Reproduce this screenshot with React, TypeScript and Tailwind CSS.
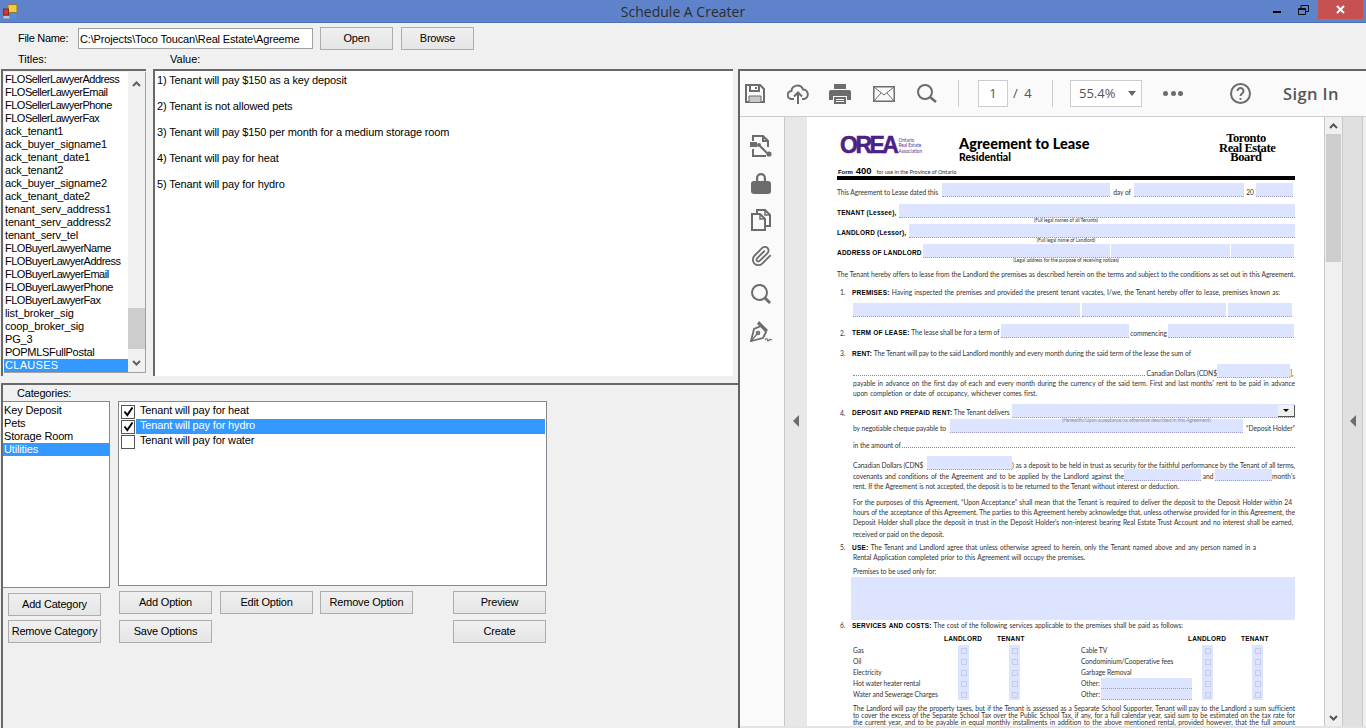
import { FC, ReactNode } from "react";

const titles = [
  "FLOSellerLawyerAddress",
  "FLOSellerLawyerEmail",
  "FLOSellerLawyerPhone",
  "FLOSellerLawyerFax",
  "ack_tenant1",
  "ack_buyer_signame1",
  "ack_tenant_date1",
  "ack_tenant2",
  "ack_buyer_signame2",
  "ack_tenant_date2",
  "tenant_serv_address1",
  "tenant_serv_address2",
  "tenant_serv_tel",
  "FLOBuyerLawyerName",
  "FLOBuyerLawyerAddress",
  "FLOBuyerLawyerEmail",
  "FLOBuyerLawyerPhone",
  "FLOBuyerLawyerFax",
  "list_broker_sig",
  "coop_broker_sig",
  "PG_3",
  "POPMLSFullPostal",
];

const clauses = [
  "1) Tenant will pay $150 as a key deposit",
  "2) Tenant is not allowed pets",
  "3) Tenant will pay $150 per month for a medium storage room",
  "4) Tenant will pay for heat",
  "5) Tenant will pay for hydro",
];

const categories = ["Key Deposit", "Pets", "Storage Room", "Utilities"];

const options = [
  { label: "Tenant will pay for heat", checked: true, selected: false },
  { label: "Tenant will pay for hydro", checked: true, selected: true },
  { label: "Tenant will pay for water", checked: false, selected: false },
];

const Btn: FC<{ className?: string; children: ReactNode }> = ({ className = "", children }) => (
  <button className={`h-[23px] shrink-0 whitespace-nowrap border border-[#adadad] bg-gradient-to-b from-[#f0f0f0] to-[#e5e5e5] text-[11px] tracking-[-0.2px] text-black ${className}`}>
    {children}
  </button>
);

const Field: FC<{ className?: string }> = ({ className = "" }) => (
  <span className={`block shrink-0 bg-[#dde4ff] border-b border-dotted border-[#9c9cc4] ${className}`} />
);

const Dots: FC<{ className?: string }> = ({ className = "" }) => (
  <span className={`block flex-1 border-b border-dotted border-[#888] mb-[2px] ${className}`} />
);

// a line of the form, spread to its width like the PDF does
const Line: FC<{ className?: string; children: ReactNode }> = ({ className = "", children }) => (
  <div className={`h-[10px] leading-[10px] whitespace-nowrap [text-align-last:justify] ${className}`}>{children}</div>
);

const B: FC<{ children: ReactNode }> = ({ children }) => (
  <b className="font-['Liberation_Sans',sans-serif] font-bold text-[6.5px] tracking-[0.2px] text-black">{children}</b>
);

const Num: FC<{ n: string; children: ReactNode; className?: string }> = ({ n, children, className = "" }) => (
  <div className={`flex h-[10px] leading-[10px] whitespace-nowrap ${className}`}>
    <span className="w-[15px] pl-[3px] shrink-0">{n}</span>
    <div className="flex-1">{children}</div>
  </div>
);

const Caption: FC<{ children: ReactNode }> = ({ children }) => (
  <div className="h-[6px] leading-[5px] text-center text-[4.9px] text-[#333]">{children}</div>
);

const Check: FC<{ className?: string }> = ({ className = "" }) => (
  <span className={`flex items-center justify-center w-[11px] h-full bg-[#dde4ff] shrink-0 ${className}`}>
    <span className="block w-[6px] h-[6px] border border-[#c6cde8]" />
  </span>
);

const ServiceRow: FC<{ left: string; right: string; other?: boolean }> = ({ left, right, other }) => (
  <div className="flex h-[11px] leading-[11px] whitespace-nowrap">
    <span className="w-[105px] shrink-0">{left}</span>
    <Check />
    <span className="w-[40px] shrink-0" />
    <Check />
    <span className="w-[61px] shrink-0" />
    <span className="w-[121px] shrink-0 flex">
      <span className="w-[20px] shrink-0">{right}</span>
      {other && <Field className="w-[91px] h-full" />}
    </span>
    <Check />
    <span className="w-[39px] shrink-0" />
    <Check />
  </div>
);

const PdfPage = () => (
  <div className="w-[517px] h-[609px] shrink-0 bg-white pl-[30px] pr-[29px] pt-[17px] overflow-hidden font-['Lato',sans-serif] text-[6.7px] tracking-[-0.05px] text-[#333]">
    <div className="flex h-[30px]">
      <div className="flex w-[122px] pl-[3px] pt-[2px]">
        <span className="font-['Liberation_Sans',sans-serif] font-bold text-[23px] leading-[19px] tracking-[-2.500px] text-[#4b2088] [-webkit-text-stroke:0.5px_#4b2088]">OREA</span>
        <span className="ml-[2px] mt-[2px] text-[4.8px] leading-[5.4px] text-[#5a3a94]">
          Ontario
          <br />
          Real Estate
          <br />
          Association
        </span>
      </div>
      <div className="w-[260px] pt-[2px] text-black font-['Lato',sans-serif] font-black tracking-normal">
        <div className="text-[14.5px] leading-[16px] tracking-[0.05px]">Agreement to Lease</div>
        <div className="text-[10.5px] leading-[10px]">Residential</div>
      </div>
      <div className="w-[54px] text-center font-['Liberation_Serif',serif] font-bold text-[12.5px] leading-[9.500px] tracking-[-0.4px] text-black">
        Toronto
        <br />
        <span className="whitespace-nowrap">Real Estate</span>
        <br />
        Board
      </div>
    </div>
    <div className="flex items-baseline h-[11px] leading-[11px] mt-[1px] text-[5.600px] whitespace-nowrap">
      <span className="font-['Liberation_Sans',sans-serif] font-bold text-[6px] text-black mr-[3px] ml-[1px]">Form</span>
      <span className="font-['Liberation_Sans',sans-serif] font-bold text-[9.500px] text-black mr-[5px]">400</span>
      for use in the Province of Ontario
    </div>
    <div className="h-[4px] bg-black" />

    <div className="flex items-end h-[14px] mt-[3px] whitespace-nowrap leading-[10px]">
      <span className="w-[105px] shrink-0">This Agreement to Lease dated this</span>
      <Field className="w-[168px] h-[14px]" />
      <span className="w-[24px] shrink-0 text-center">day of</span>
      <Field className="w-[110px] h-[14px]" />
      <span className="w-[12px] shrink-0 text-center">20</span>
      <Field className="w-[37px] h-[14px]" />
    </div>
    <div className="flex items-end h-[14px] mt-[7px] whitespace-nowrap leading-[10px]">
      <span className="w-[62px] shrink-0"><B>TENANT (Lessee),</B></span>
      <Field className="flex-1 h-[14px]" />
    </div>
    <Caption>(Full legal names of all Tenants)</Caption>
    <div className="flex items-end h-[14px] whitespace-nowrap leading-[10px]">
      <span className="w-[72px] shrink-0"><B>LANDLORD (Lessor),</B></span>
      <Field className="flex-1 h-[14px]" />
    </div>
    <Caption>(Full legal name of Landlord)</Caption>
    <div className="flex items-end h-[14px] gap-[1px] whitespace-nowrap leading-[10px]">
      <span className="w-[85px] shrink-0"><B>ADDRESS OF LANDLORD</B></span>
      <Field className="w-[187px] h-[14px]" />
      <Field className="w-[119px] h-[14px]" />
      <Field className="w-[63px] h-[14px]" />
    </div>
    <Caption>(Legal address for the purpose of receiving notices)</Caption>

    <Line className="mt-[5px]">
      The Tenant hereby offers to lease from the Landlord the premises as described herein on the terms and subject to the conditions as set out in this Agreement.
    </Line>

    <Num n="1." className="mt-[8px] pr-[15px]">
      <Line><B>PREMISES:</B> Having inspected the premises and provided the present tenant vacates, I/we, the Tenant hereby offer to lease, premises known as:</Line>
    </Num>
    <div className="flex gap-[2px] h-[14px] mt-[6px] ml-[16px]">
      <Field className="w-[227px] h-[14px]" />
      <Field className="w-[144px] h-[14px]" />
      <Field className="w-[64px] h-[14px]" />
    </div>

    <div className="flex items-end h-[14px] mt-[7px] whitespace-nowrap leading-[10px]">
      <span className="w-[15px] pl-[3px] shrink-0">2.</span>
      <span className="w-[145px] shrink-0 [text-align-last:justify]"><B>TERM OF LEASE:</B> The lease shall be for a term of</span>
      <span className="block w-[4px] shrink-0" />
      <Field className="w-[128px] h-[14px]" />
      <span className="w-[39px] shrink-0 text-center">commencing</span>
      <Field className="w-[126px] h-[14px]" />
    </div>
    <Num n="3." className="mt-[10px]">
      <Line className="w-[339px]"><B>RENT:</B> The Tenant will pay to the said Landlord monthly and every month during the said term of the lease the sum of</Line>
    </Num>

    <div className="flex items-end h-[14px] mt-[6px] ml-[16px] whitespace-nowrap leading-[10px]">
      <Dots />
      <span className="w-[72px] shrink-0 text-right">Canadian Dollars (CDN$</span>
      <Field className="w-[73px] h-[14px]" />
      <span className="w-[5px] shrink-0">],</span>
    </div>
    <div className="ml-[16px]">
      <Line>payable in advance on the first day of each and every month during the currency of the said term. First and last months' rent to be paid in advance</Line>
      <Line className="w-[184px]">upon completion or date of occupancy, whichever comes first.</Line>
    </div>

    <div className="relative flex items-end h-[14px] mt-[6px] whitespace-nowrap leading-[10px]">
      <span className="w-[15px] pl-[3px] shrink-0">4.</span>
      <span className="w-[160px] shrink-0"><B>DEPOSIT AND PREPAID RENT:</B> The Tenant delivers</span>
      <span className="relative block flex-1 h-[14px]">
        <Field className="w-full h-[14px]" />
        <span className="absolute right-0 top-[1px] w-[17px] h-[12px] flex items-center justify-center bg-[#f0f0f0] border-r border-b border-[#555]">
          <span className="block border-x-[3px] border-x-transparent border-t-[3px] border-t-black" />
        </span>
      </span>
      <span className="absolute left-[225px] top-[13px] z-10 text-[4.9px] leading-[6px] text-[#8d8d9c]">
        (Herewith/Upon acceptance/as otherwise described in this Agreement)
      </span>
    </div>
    <div className="flex items-end h-[14px] mt-[1px] ml-[16px] whitespace-nowrap leading-[10px]">
      <span className="w-[97px] shrink-0">by negotiable cheque payable to</span>
      <Field className="w-[293px] h-[14px]" />
      <span className="flex-1 text-right">“Deposit Holder”</span>
    </div>
    <div className="flex items-end h-[10px] mt-[7px] ml-[16px] whitespace-nowrap leading-[10px]">
      <span className="w-[49px] shrink-0">in the amount of</span>
      <Dots />
    </div>

    <div className="flex items-end h-[14px] mt-[6px] ml-[16px] whitespace-nowrap leading-[10px]">
      <span className="w-[74px] shrink-0">Canadian Dollars (CDN$</span>
      <Field className="w-[85px] h-[14px]" />
      <span className="flex-1 [text-align-last:justify]">) as a deposit to be held in trust as security for the faithful performance by the Tenant of all terms,</span>
    </div>
    <div className="flex items-end h-[11px] ml-[16px] whitespace-nowrap leading-[10px]">
      <span className="w-[271px] shrink-0 [text-align-last:justify]">covenants and conditions of the Agreement and to be applied by the Landlord against the</span>
      <Field className="w-[77px] h-[12px]" />
      <span className="w-[14px] shrink-0 text-center">and</span>
      <Field className="w-[57px] h-[12px]" />
      <span className="flex-1 text-right">month's</span>
    </div>
    <div className="ml-[16px]">
      <Line className="w-[326px]">rent. If the Agreement is not accepted, the deposit is to be returned to the Tenant without interest or deduction.</Line>
      <Line className="mt-[6px] pr-[3px]">For the purposes of this Agreement, “Upon Acceptance” shall mean that the Tenant is required to deliver the deposit to the Deposit Holder within 24</Line>
      <Line>hours of the acceptance of this Agreement.  The parties to this Agreement hereby acknowledge that, unless otherwise provided for in this Agreement, the</Line>
      <Line className="pr-[2px]">Deposit Holder shall place the deposit in trust in the Deposit Holder's non-interest bearing Real Estate Trust Account and no interest shall be earned,</Line>
      <Line className="mt-[2px] w-[91px]">received or paid on the deposit.</Line>
    </div>

    <Num n="5." className="mt-[3px]">
      <Line className="pr-[39px]"><B>USE:</B> The Tenant and Landlord agree that unless otherwise agreed to herein, only the Tenant named above and any person named in a</Line>
    </Num>
    <div className="ml-[16px]">
      <Line className="w-[232px]">Rental Application completed prior to this Agreement will occupy the premises.</Line>
      <Line className="mt-[4px] w-[83px]">Premises to be used only for:</Line>
    </div>
    <Field className="h-[43px] mt-[1px] ml-[14px] border-b-0" />

    <Num n="6.">
      <Line className="w-[331px]"><B>SERVICES AND COSTS:</B> The cost of the following services applicable to the premises shall be paid as follows:</Line>
    </Num>
    <div className="flex h-[10px] mt-[3px] leading-[10px]">
      <span className="ml-[107px] w-[53px] shrink-0"><B>LANDLORD</B></span>
      <span className="w-[191px] shrink-0"><B>TENANT</B></span>
      <span className="w-[53px] shrink-0"><B>LANDLORD</B></span>
      <span><B>TENANT</B></span>
    </div>
    <div className="mt-[2px] ml-[16px]">
      <ServiceRow left="Gas" right="Cable TV" />
      <ServiceRow left="Oil" right="Condominium/Cooperative fees" />
      <ServiceRow left="Electricity" right="Garbage Removal" />
      <ServiceRow left="Hot water heater rental" right="Other:" other />
      <ServiceRow left="Water and Sewerage Charges" right="Other:" other />
    </div>
    <div className="mt-[5px] ml-[16px] leading-[7px]">
      <div className="whitespace-nowrap [text-align-last:justify]">The Landlord will pay the property taxes, but if the Tenant is assessed as a Separate School Supporter, Tenant will pay to the Landlord a sum sufficient</div>
      <div className="whitespace-nowrap [text-align-last:justify]">to cover the excess of the Separate School Tax over the Public School Tax, if any, for a full calendar year, said sum to be estimated on the tax rate for</div>
      <div className="whitespace-nowrap [text-align-last:justify]">the current year, and to be payable in equal monthly installments in addition to the above mentioned rental, provided however, that the full amount</div>
    </div>
  </div>
);

const tool = "shrink-0 text-[#6c6c6c]";

const Toolbar = () => (
  <div className="flex items-center h-[46px] shrink-0 bg-[#fafafa] border-b border-[#cccccc] font-['Open_Sans',sans-serif] text-[#555]">
    <svg width="20" height="19" viewBox="0 0 20 19" fill="none" stroke="currentColor" strokeWidth="2" className={`ml-[5px] ${tool}`}>
      <path d="M1 1h14l4 4v13H1z" />
      <path d="M5 1v6h9V1M11 3v2" />
      <path d="M4 18v-6h12v6" fill="#c8c8c8" strokeWidth="1" />
    </svg>
    <svg width="22" height="20" viewBox="0 0 22 20" fill="none" stroke="currentColor" strokeWidth="2" className={`ml-[22px] ${tool}`}>
      <path d="M7 15H5a4 4 0 0 1-.6-8A6 6 0 0 1 16 5.500 4.800 4.800 0 0 1 17 15h-2" />
      <path d="M11 20V9M7 12.500 11 8.500l4 4" />
    </svg>
    <svg width="22" height="20" viewBox="0 0 22 20" className={`ml-[20px] ${tool}`} fill="currentColor">
      <path d="M5 0h12v5H5zM2 6h18a2 2 0 0 1 2 2v8h-4v-4H4v4H0V8a2 2 0 0 1 2-2z" />
      <path d="M5 13h12v7H5z" />
      <path d="M7 15h8v1H7zM7 17h8v1H7z" fill="#fafafa" />
    </svg>
    <svg width="22" height="16" viewBox="0 0 22 16" fill="none" stroke="currentColor" strokeWidth="1.500" className={`ml-[22px] ${tool}`}>
      <path d="M.8.8h20.400v14.400H.8z" />
      <path d="m1 1 10 8 10-8M1 15l7-8M21 15l-7-8" strokeWidth="1" />
    </svg>
    <svg width="20" height="19" viewBox="0 0 20 19" fill="none" stroke="currentColor" strokeWidth="2" className={`ml-[22px] ${tool}`}>
      <circle cx="8" cy="8" r="7" />
      <path d="m13 13 6 5" strokeWidth="2.600" />
    </svg>
    <span className="block ml-[21px] w-[1px] h-[27px] bg-[#cccccc]" />
    <span className="flex items-center justify-center ml-[19px] w-[30px] h-[27px] bg-white border border-[#cccccc] text-[13px]">1</span>
    <span className="ml-[5px] w-[19px] text-[13px] tracking-[1.500px] whitespace-nowrap">/ 4</span>
    <span className="block ml-[20px] w-[1px] h-[27px] bg-[#cccccc]" />
    <span className="flex items-center ml-[17px] w-[72px] h-[27px] bg-white border border-[#cccccc] text-[13px] pl-[8px]">
      55.4%
      <span className="block ml-[13px] border-x-[4px] border-x-transparent border-t-[5px] border-t-[#666]" />
    </span>
    <span className="flex gap-[2.500px] ml-[21px]">
      <span className="block w-[5px] h-[5px] rounded-full bg-[#6c6c6c]" />
      <span className="block w-[5px] h-[5px] rounded-full bg-[#6c6c6c]" />
      <span className="block w-[5px] h-[5px] rounded-full bg-[#6c6c6c]" />
    </span>
    <svg width="21" height="21" viewBox="0 0 21 21" fill="none" stroke="currentColor" strokeWidth="2" className={`ml-[47px] ${tool}`}>
      <circle cx="10.500" cy="10.500" r="9.500" />
      <path d="M7.500 8a3 3 0 1 1 4.500 2.600c-1 .6-1.500 1.100-1.500 2.400" />
      <path d="M10.500 15v1.800" />
    </svg>
    <span className="ml-[32px] mt-[2px] text-[16.500px] font-semibold tracking-[0.4px] whitespace-nowrap">Sign In</span>
  </div>
);

const SideTools = () => (
  <div className="flex flex-col items-start w-[45px] shrink-0 bg-[#fafafa] border-r border-[#c8c8c8] pl-[10px] pt-[18px] text-[#6c6c6c]">
    <svg width="23" height="22" viewBox="0 0 23 22" fill="none" stroke="currentColor" strokeWidth="2">
      <path d="M3 6V1h10l5 5v6M13 1v5h5" />
      <path d="M0 7h7v5H0z" fill="currentColor" stroke="none" />
      <path d="M3 14v7h13" />
      <path d="m10 11 7 7" strokeWidth="2" />
      <circle cx="19" cy="19" r="2.600" fill="currentColor" stroke="none" />
      <circle cx="9" cy="10" r="2" fill="currentColor" stroke="none" />
    </svg>
    <svg width="20" height="22" viewBox="0 0 20 22" className="mt-[15px] ml-[1px]" fill="currentColor">
      <path d="M5 9V6a5 5 0 0 1 10 0v3h-2.200V6a2.800 2.800 0 0 0-5.600 0v3z" />
      <rect x="0" y="9" width="20" height="13" rx="3" />
    </svg>
    <svg width="20" height="22" viewBox="0 0 20 22" fill="none" stroke="currentColor" strokeWidth="2" className="mt-[15px] ml-[1px]">
      <path d="M6 5V1h8l5 5v11h-5" />
      <path d="M1 5h8l5 5v11H1z" />
      <path d="M14 1v5h5M9 5v5h5" strokeWidth="1.500" />
    </svg>
    <svg width="22" height="22" viewBox="0 0 24 24" fill="none" stroke="currentColor" strokeWidth="2" className="mt-[14px] ml-[1px]">
      <path d="m21.440 11.050-9.190 9.190a6 6 0 0 1-8.490-8.490l8.570-8.570A4 4 0 1 1 18 8.840l-8.590 8.570a2 2 0 0 1-2.830-2.830l8.490-8.480" />
    </svg>
    <svg width="20" height="20" viewBox="0 0 20 20" fill="none" stroke="currentColor" strokeWidth="2" className="mt-[17px] ml-[1px]">
      <circle cx="8.500" cy="8.500" r="7.500" />
      <path d="m14 14 5 5" strokeWidth="2.800" />
    </svg>
    <svg width="23" height="22" viewBox="0 0 23 22" fill="none" stroke="currentColor" strokeWidth="1.800" className="mt-[16px]">
      <path d="M1 21 4 9l7-3 5 6-3 6z" />
      <path d="M9 1l9 9-2 2-9-8z" fill="currentColor" stroke="none" />
      <path d="m1 21 6-7" strokeWidth="1.200" />
      <circle cx="8" cy="13" r="1.400" />
      <path d="M15 20c1-2 2-2 2.500 0s1.500 0 2-.5.5 1 2.500 0" strokeWidth="1.200" />
    </svg>
  </div>
);

const Gutter = () => (
  <div className="flex items-center justify-center w-[22px] shrink-0 bg-[#e8e8e8] pb-[2px]">
    <span className="block border-y-[6px] border-y-transparent border-r-[6px] border-r-[#6c6c6c]" />
  </div>
);

const PdfScrollbar = () => (
  <div className="flex flex-col w-[18px] shrink-0 bg-[#f0f0f0] border-l border-[#c8c8c8] px-[1px]">
    <div className="flex items-center justify-center h-[17px] shrink-0">
      <svg width="9" height="6" viewBox="0 0 9 6" fill="none" stroke="#555" strokeWidth="2"><path d="m1 5 3.500-3.500L8 5" /></svg>
    </div>
    <div className="h-[128px] shrink-0 bg-[#cdcdcd]" />
    <div className="flex-1" />
    <div className="flex items-center justify-center h-[17px] shrink-0">
      <svg width="9" height="6" viewBox="0 0 9 6" fill="none" stroke="#555" strokeWidth="2"><path d="m1 1 3.500 3.500L8 1" /></svg>
    </div>
  </div>
);

const Viewer = () => (
  <div className="flex-1 flex flex-col border-t-2 border-l-2 border-[#646464] min-w-0">
    <Toolbar />
    <div className="flex flex-1 min-h-0 border-b-2 border-[#e4e4e4]">
      <SideTools />
      <Gutter />
      <PdfPage />
      <PdfScrollbar />
      <div className="flex items-center justify-center w-[21px] shrink-0 bg-[#e0e0e0] border-l border-r border-[#c8c8c8] pb-[2px]">
        <span className="block border-y-[6px] border-y-transparent border-r-[6px] border-r-[#6c6c6c]" />
      </div>
    </div>
  </div>
);

const TitlesList = () => (
  <div className="relative w-[145px] h-[307px] shrink-0 border-t-2 border-l-2 border-[#696969]">
    <div className="flex h-[301px] ml-[1px] mt-[1px] bg-white border-r border-b border-[#a0a0a0]">
      <div className="w-[124px] shrink-0 pt-[1px] leading-[13px] whitespace-nowrap">
        {titles.map((t) => (
          <div key={t} className={`h-[13px] pl-[1px] ${t.startsWith("FLO") ? "tracking-[-0.5px]" : t.startsWith("POP") ? "tracking-[-0.3px]" : "tracking-[-0.15px]"}`}>{t}</div>
        ))}
        <div className="h-[13px] pl-[1px] bg-[#3399ff] text-white tracking-[0.3px]">CLAUSES</div>
      </div>
      <div className="flex flex-col flex-1 bg-[#f0f0f0]">
        <div className="flex items-center justify-center h-[17px] mt-[3px]">
          <svg width="9" height="6" viewBox="0 0 9 6" fill="none" stroke="#606060" strokeWidth="2"><path d="m1 5 3.500-3.500L8 5" /></svg>
        </div>
        <div className="h-[41px] mt-[216px] bg-[#cdcdcd]" />
        <div className="flex items-center justify-center h-[17px] mt-[5px]">
          <svg width="9" height="6" viewBox="0 0 9 6" fill="none" stroke="#606060" strokeWidth="2"><path d="m1 1 3.500 3.500L8 1" /></svg>
        </div>
      </div>
    </div>
  </div>
);

const ValueBox = () => (
  <div className="w-[580px] h-[307px] shrink-0 ml-[7px] border-t-2 border-l-2 border-[#696969] bg-white pl-[2px] pt-[3px] leading-[13px] tracking-[-0.13px]">
    {clauses.map((c) => (
      <div key={c} className="h-[26px]">{c}</div>
    ))}
  </div>
);

const CategoryPanel = () => (
  <div className="relative flex-1 border-t-2 border-l-2 border-[#696969]">
    <div className="h-[16px] pt-[2px] pl-[14px] leading-[13px] tracking-[-0.2px]">Categories:</div>
    <div className="flex">
      <div className="w-[107px] h-[187px] shrink-0 bg-white border-t border-r border-b border-[#828790] leading-[13px] pt-[2px] tracking-[-0.15px]">
        {categories.map((c) => (
          <div key={c} className={`h-[13px] pl-[1px] ${c === "Utilities" ? "bg-[#3399ff] text-white" : ""}`}>{c}</div>
        ))}
      </div>
      <div className="w-[429px] h-[185px] shrink-0 ml-[8px] bg-white border border-[#828790] pl-[2px] pr-[1px] pt-[2px] tracking-[-0.15px]">
        {options.map((o) => (
          <div key={o.label} className="flex items-center h-[15px]">
            <span className="flex items-center justify-center w-[14px] h-[14px] shrink-0 border border-[#555] bg-white">
              {o.checked && (
                <svg width="11" height="11" viewBox="0 0 11 11" fill="none" stroke="#000" strokeWidth="2"><path d="m1.500 5.500 2.800 3.500L9.500 1.500" /></svg>
              )}
            </span>
            <span className={`flex-1 h-[15px] ml-[1px] pl-[4px] leading-[13px] ${o.selected ? "bg-[#3399ff] text-white" : ""}`}>{o.label}</span>
          </div>
        ))}
      </div>
    </div>
    <div className="flex mt-[3px] ml-[5px]">
      <div className="flex flex-col gap-[4px] mt-[2px] w-[93px]">
        <Btn className="w-[93px] h-[22px]">Add Category</Btn>
        <Btn className="w-[93px] h-[22px]">Remove Category</Btn>
      </div>
      <div className="ml-[18px]">
        <div className="flex">
          <Btn className="w-[93px]">Add Option</Btn>
          <Btn className="w-[93px] ml-[8px]">Edit Option</Btn>
          <Btn className="w-[93px] ml-[7px]">Remove Option</Btn>
          <Btn className="w-[93px] ml-[40px]">Preview</Btn>
        </div>
        <div className="flex justify-between w-[427px] mt-[6px]">
          <Btn className="w-[93px]">Save Options</Btn>
          <Btn className="w-[93px]">Create</Btn>
        </div>
      </div>
    </div>
  </div>
);

export default function App() {
  return (
    <div className="flex flex-col w-[1366px] h-[728px] overflow-hidden bg-[#f0f0f0] font-['Liberation_Sans',sans-serif] text-[11px] text-black">
      <div className="relative flex items-center justify-center h-[23px] shrink-0 bg-[#5e83ca] border-b border-[#4c70b6]">
        <svg width="15" height="15" viewBox="0 0 15 15" className="absolute left-[3px] top-[4px]">
          <rect x="5" y="0.500" width="9" height="8" fill="#f6c945" stroke="#8a7a3c" />
          <rect x="0.500" y="5" width="5" height="6" fill="#d8362b" stroke="#7f2a24" />
          <rect x="8" y="10" width="5" height="4" fill="#4f8fe0" />
          <rect x="0.500" y="12" width="6" height="2.500" fill="#b8c4d8" />
        </svg>
        <span className="font-['Open_Sans',sans-serif] text-[14px] text-[#2d2d2d]">Schedule A Creater</span>
        <div className="absolute right-[3px] top-0 flex items-start">
          <span className="block w-[8px] h-[2px] mt-[11px] bg-black" />
          <svg width="11" height="10" viewBox="0 0 11 10" fill="none" stroke="#111" strokeWidth="1" className="ml-[17px] mt-[5px]">
            <path d="M.5 3.500h7v6h-7zM.5 4.500h7" />
            <path d="M3 3V.5h7.500v6H8" />
          </svg>
          <span className="flex items-center justify-center w-[45px] h-[19px] ml-[9px] bg-[#c75050]">
            <svg width="9" height="9" viewBox="0 0 9 9" fill="none" stroke="#fff" strokeWidth="2"><path d="m1 1 7 7M8 1 1 8" /></svg>
          </span>
        </div>
      </div>

      <div className="h-[46px] shrink-0">
        <div className="flex items-center h-[21px] mt-[5px] pl-[18px]">
          <span className="w-[60px] tracking-[-0.3px]">File Name:</span>
          <input
            readOnly
            value="C:\Projects\Toco Toucan\Real Estate\Agreeme"
            className="w-[235px] h-[21px] px-[1px] bg-white border border-[#a0a0a0] outline-none tracking-[-0.15px]"
          />
          <Btn className="w-[73px] ml-[7px]">Open</Btn>
          <Btn className="w-[73px] ml-[8px]">Browse</Btn>
        </div>
        <div className="flex pl-[18px] mt-[4px] leading-[13px]">
          <span className="w-[152px]">Titles:</span>
          <span>Value:</span>
        </div>
      </div>

      <div className="flex flex-1 min-h-0">
        <div className="flex flex-col w-[738px] shrink-0 pl-[1px]">
          <div className="flex h-[308px] shrink-0">
            <TitlesList />
            <ValueBox />
          </div>
          <div className="h-[6px] shrink-0" />
          <CategoryPanel />
        </div>
        <Viewer />
      </div>
    </div>
  );
}
